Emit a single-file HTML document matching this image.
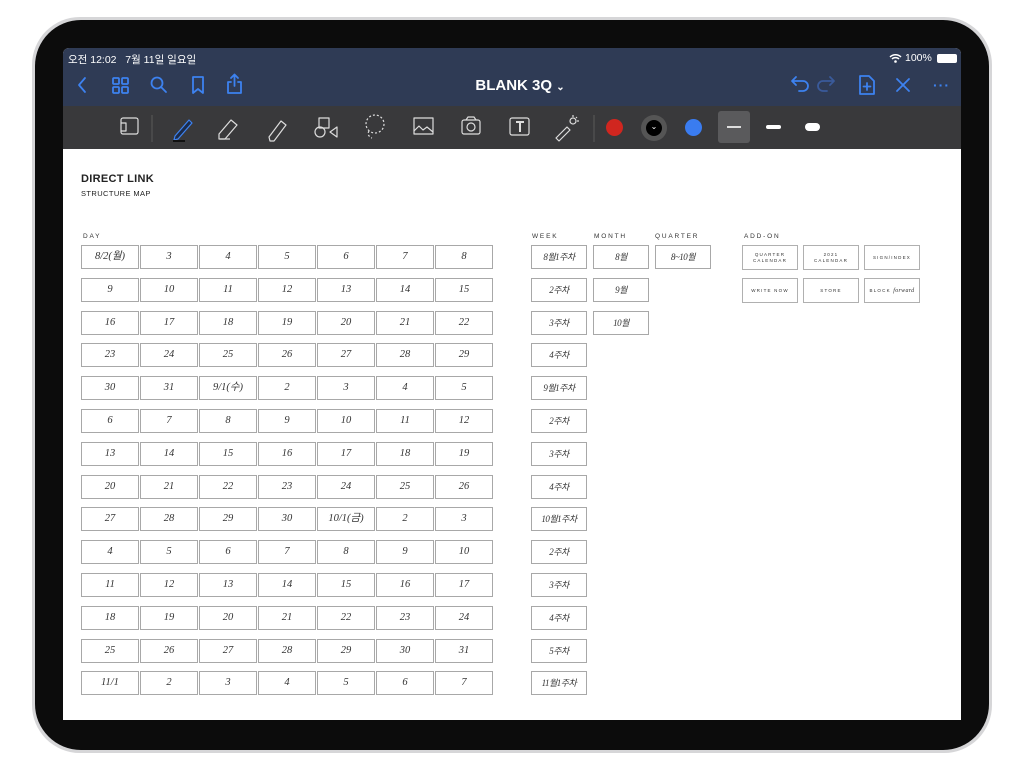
<!DOCTYPE html>
<html><head><meta charset="utf-8"><style>
*{margin:0;padding:0;box-sizing:border-box}
body{width:1024px;height:768px;background:#fff;position:relative;overflow:hidden;font-family:"Liberation Sans","Noto Sans CJK KR",sans-serif}
.dev{position:absolute;left:32px;top:17px;width:960px;height:736px;border-radius:48px;background:#d6d6d8;}
.dev2{position:absolute;left:35px;top:20px;width:954px;height:730px;border-radius:46px;background:#0c0c0c;}
.scr{position:absolute;left:63px;top:48px;width:898px;height:672px;background:#fff;border-radius:6px 6px 0 0;overflow:hidden}
.nav{position:absolute;left:0;top:0;width:898px;height:58px;background:#2f3b55}
.tb{position:absolute;left:0;top:58px;width:898px;height:43px;background:#39393b}
.st{position:absolute;top:4px;color:#fff;font-size:10.5px}
.ttl{position:absolute;left:8px;width:898px;top:29px;text-align:center;color:#fff;font-size:15px;font-weight:bold}
svg{position:absolute}
.c{position:relative;height:24px;border:1px solid #a8a8a8;font-family:"Liberation Serif","Noto Sans CJK KR",serif;font-style:italic;font-size:10.5px;text-align:center;line-height:22px;color:#333}
.w .c{font-size:9px;letter-spacing:-.5px}
.lb{position:absolute;font-size:6.5px;letter-spacing:1.8px;color:#333}
.a{position:absolute;height:25px;border:1px solid #b0b0b0;font-size:4.5px;letter-spacing:1.2px;color:#333;display:flex;align-items:center;justify-content:center;text-align:center;line-height:6px}
</style></head><body>
<div class="dev"></div><div class="dev2"></div>
<div class="scr">
<div class="nav">
<div class="st" style="left:5px">오전 12:02&nbsp;&nbsp; 7월 11일 일요일</div>
<div class="st" style="left:842px">100%</div>
<div style="position:absolute;left:874px;top:6px;width:20px;height:9px;border-radius:2px;background:#fff"></div>
<svg style="left:826px;top:5px" width="13" height="10" viewBox="0 0 13 10"><path d="M1 4a8 8 0 0 1 11 0M3 6a5 5 0 0 1 7 0" stroke="#fff" stroke-width="1.5" fill="none"/><circle cx="6.5" cy="8.5" r="1.3" fill="#fff"/></svg>
<div class="ttl">BLANK 3Q <span style="font-size:10px">⌄</span></div>
<svg style="left:0;top:22px" width="898" height="30" viewBox="0 0 898 30" fill="none" stroke="#3d82f0" stroke-width="1.8" stroke-linecap="round" stroke-linejoin="round">
<path d="M22 8l-6 7 6 7"/>
<rect x="50" y="8" width="6" height="6" rx="1"/><rect x="59" y="8" width="6" height="6" rx="1"/><rect x="50" y="17" width="6" height="6" rx="1"/><rect x="59" y="17" width="6" height="6" rx="1"/>
<circle cx="94" cy="13" r="5.5"/><path d="M98 17l5 5"/>
<path d="M130 7h10v16l-5-4-5 4z"/>
<path d="M168 12h-3v11h13V12h-3M171.5 5v11M168 8l3.5-3.5L175 8"/>
<path d="M730 11h10a5 5 0 0 1 0 10h-4M733 7l-4 4 4 4"/>
<path d="M770 11h-10a5 5 0 0 0 0 10h4M767 7l4 4-4 4" stroke="#3a5a9a"/>
<path d="M797 6h9l5 5v13h-14zM804 13v7M800.5 16.5h7"/>
<path d="M834 9l12 12M846 9l-12 12"/>
</svg>
<div style="position:absolute;left:870px;top:29px;color:#3d82f0;font-size:14px;font-weight:bold;letter-spacing:1px">···</div>
</div>
<div class="tb">
<svg width="898" height="43" viewBox="0 0 898 43" fill="none" stroke="#ddd" stroke-width="1.2" stroke-linejoin="round">
<rect x="58" y="12" width="17" height="16" rx="2"/><path d="M58 17h5v8h-5"/>
<line x1="89" y1="9" x2="89" y2="36" stroke="#555"/>
<path d="M112 30l14-16 3 3-14 16-4 1z" stroke="#3d82f0" fill="#1b2b4a"/><path d="M110 35h12" stroke="#111" stroke-width="2"/>
<path d="M156 28l12-14 6 5-12 14h-6z"/><path d="M157 33h10"/>
<path d="M206 31l12-16 5 4-12 16-4 0z"/>
<rect x="256" y="12" width="10" height="10"/><circle cx="257" cy="26" r="5"/><path d="M274 21v10l-7-5z"/>
<circle cx="312" cy="18" r="9" stroke-dasharray="2 2"/><path d="M306 25c-2 3 0 6 3 7" stroke-dasharray="2 2"/>
<rect x="351" y="12" width="19" height="16"/><path d="M351 25l5-5 4 4 4-3 6 5"/>
<rect x="399" y="14" width="18" height="14" rx="2"/><circle cx="408" cy="21" r="4"/><path d="M403 14l2-3h6l2 3"/>
<rect x="447" y="12" width="19" height="17" rx="2"/><path d="M453 16h8M457 16v10" stroke-width="2"/>
<path d="M496 35l-3-3 11-11 3 3z"/><circle cx="510" cy="15" r="3"/><path d="M510 9v2M516 15h-2M514 11l-1 1"/>
<line x1="531" y1="9" x2="531" y2="36" stroke="#555"/>
</svg>
<div style="position:absolute;left:543px;top:13px;width:17px;height:17px;border-radius:50%;background:#d0261f"></div>
<div style="position:absolute;left:578px;top:9px;width:26px;height:26px;border-radius:50%;background:#555"></div>
<div style="position:absolute;left:583px;top:14px;width:16px;height:16px;border-radius:50%;background:#000;color:#fff;font-size:8px;text-align:center;line-height:14px">⌄</div>
<div style="position:absolute;left:622px;top:13px;width:17px;height:17px;border-radius:50%;background:#3a7cf0"></div>
<div style="position:absolute;left:655px;top:5px;width:32px;height:32px;border-radius:3px;background:#5a5a5c"></div>
<div style="position:absolute;left:664px;top:20px;width:14px;height:2px;background:#ddd"></div>
<div style="position:absolute;left:703px;top:19px;width:15px;height:4px;border-radius:2px;background:#fff"></div>
<div style="position:absolute;left:742px;top:17px;width:15px;height:8px;border-radius:4px;background:#fff"></div>
</div>

<div style="position:absolute;left:18px;top:125px;font-size:11px;font-weight:bold;letter-spacing:.3px;color:#222">DIRECT LINK</div>
<div style="position:absolute;left:18px;top:141px;font-size:7.5px;letter-spacing:.4px;color:#222">STRUCTURE MAP</div>
<div class="lb" style="left:20px;top:185px">DAY</div>
<div class="lb" style="left:469px;top:185px">WEEK</div>
<div class="lb" style="left:531px;top:185px">MONTH</div>
<div class="lb" style="left:592px;top:185px">QUARTER</div>
<div class="lb" style="left:681px;top:185px">ADD-ON</div>
</div>

<div style="position:absolute;left:81px;top:245px;width:412px;display:grid;grid-template-columns:repeat(7,58px);column-gap:1px;row-gap:8.8px">
<div class="c">8/2(월)</div><div class="c">3</div><div class="c">4</div><div class="c">5</div><div class="c">6</div><div class="c">7</div><div class="c">8</div>
<div class="c">9</div><div class="c">10</div><div class="c">11</div><div class="c">12</div><div class="c">13</div><div class="c">14</div><div class="c">15</div>
<div class="c">16</div><div class="c">17</div><div class="c">18</div><div class="c">19</div><div class="c">20</div><div class="c">21</div><div class="c">22</div>
<div class="c">23</div><div class="c">24</div><div class="c">25</div><div class="c">26</div><div class="c">27</div><div class="c">28</div><div class="c">29</div>
<div class="c">30</div><div class="c">31</div><div class="c">9/1(수)</div><div class="c">2</div><div class="c">3</div><div class="c">4</div><div class="c">5</div>
<div class="c">6</div><div class="c">7</div><div class="c">8</div><div class="c">9</div><div class="c">10</div><div class="c">11</div><div class="c">12</div>
<div class="c">13</div><div class="c">14</div><div class="c">15</div><div class="c">16</div><div class="c">17</div><div class="c">18</div><div class="c">19</div>
<div class="c">20</div><div class="c">21</div><div class="c">22</div><div class="c">23</div><div class="c">24</div><div class="c">25</div><div class="c">26</div>
<div class="c">27</div><div class="c">28</div><div class="c">29</div><div class="c">30</div><div class="c">10/1(금)</div><div class="c">2</div><div class="c">3</div>
<div class="c">4</div><div class="c">5</div><div class="c">6</div><div class="c">7</div><div class="c">8</div><div class="c">9</div><div class="c">10</div>
<div class="c">11</div><div class="c">12</div><div class="c">13</div><div class="c">14</div><div class="c">15</div><div class="c">16</div><div class="c">17</div>
<div class="c">18</div><div class="c">19</div><div class="c">20</div><div class="c">21</div><div class="c">22</div><div class="c">23</div><div class="c">24</div>
<div class="c">25</div><div class="c">26</div><div class="c">27</div><div class="c">28</div><div class="c">29</div><div class="c">30</div><div class="c">31</div>
<div class="c">11/1</div><div class="c">2</div><div class="c">3</div><div class="c">4</div><div class="c">5</div><div class="c">6</div><div class="c">7</div>
</div>
<div class="w" style="position:absolute;left:531px;top:245px;width:56px;display:grid;grid-template-columns:56px;row-gap:8.8px">
<div class="c">8월1주차</div><div class="c">2주차</div><div class="c">3주차</div><div class="c">4주차</div><div class="c">9월1주차</div><div class="c">2주차</div><div class="c">3주차</div><div class="c">4주차</div><div class="c">10월1주차</div><div class="c">2주차</div><div class="c">3주차</div><div class="c">4주차</div><div class="c">5주차</div><div class="c">11월1주차</div>
</div>
<div class="w" style="position:absolute;left:593px;top:245px;width:56px;display:grid;grid-template-columns:56px;row-gap:8.8px">
<div class="c">8월</div><div class="c">9월</div><div class="c">10월</div>
</div>
<div class="w" style="position:absolute;left:655px;top:245px;width:56px"><div class="c">8~10월</div></div>
<div class="a" style="left:742px;top:245px;width:56px">QUARTER<br>CALENDAR</div>
<div class="a" style="left:803px;top:245px;width:56px">2021<br>CALENDAR</div>
<div class="a" style="left:864px;top:245px;width:56px">SIGN/INDEX</div>
<div class="a" style="left:742px;top:278px;width:56px">WRITE NOW</div>
<div class="a" style="left:803px;top:278px;width:56px">STORE</div>
<div class="a" style="left:864px;top:278px;width:56px">BLOCK&nbsp;<i style="font-family:'Liberation Serif',serif;letter-spacing:.3px;font-size:6px">forward</i></div>
</body></html>
